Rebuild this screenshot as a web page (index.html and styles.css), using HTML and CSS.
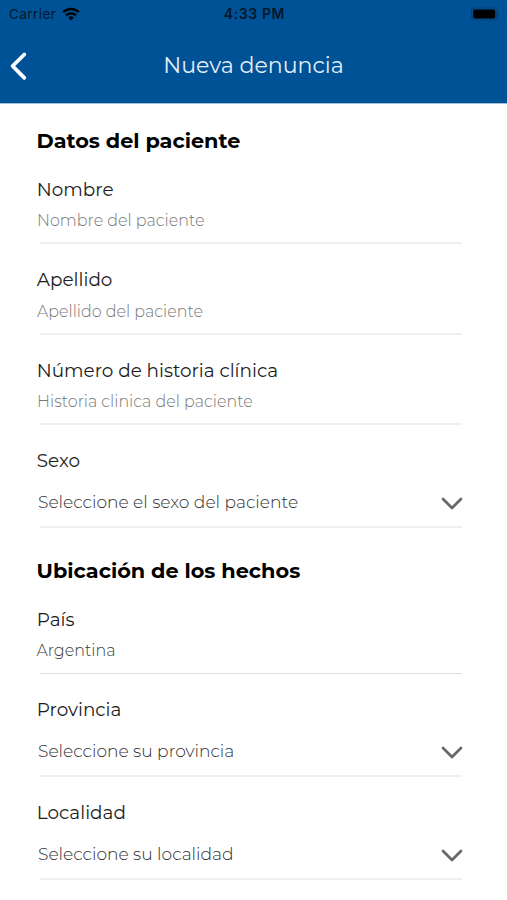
FILE: index.html
```html
<!DOCTYPE html>
<html lang="es">
<head>
<meta charset="utf-8">
<title>Nueva denuncia</title>
<link rel="stylesheet" href="styles.css">
</head>
<body>
<header class="header">
  <div class="status">
    <div class="carrier"><span>Carrier</span>
      <svg class="wifi" viewBox="0 0 18 14"><g fill="none" stroke="currentColor" stroke-width="2.4"><path d="M1.2 5.2a11.2 11.2 0 0 1 15.6 0"/><path d="M4.1 8.4a7 7 0 0 1 9.8 0"/></g><path d="M9 13.6 6.2 10.7a4 4 0 0 1 5.6 0z" fill="currentColor"/></svg>
    </div>
    <div class="time">4:33 PM</div>
    <div class="battery"><svg viewBox="0 0 30 14"><rect x="1.600" y="1" width="25" height="12" rx="3.5" fill="none" stroke="#063f78" stroke-width="1.2"/><rect x="3.200" y="2.6" width="22" height="8.8" rx="2" fill="#000"/><path d="M28.200 5v4c1.4-.5 1.4-3.500 0-4z" fill="#063f78"/></svg></div>
  </div>
  <div class="nav">
    <svg class="back" viewBox="0 0 18 30"><path d="M15.300 3.500 3.600 15 15.300 26.800" fill="none" stroke="#fff" stroke-width="3.800" stroke-linecap="round" stroke-linejoin="round"/></svg>
    <h1 class="title">Nueva denuncia</h1>
  </div>
</header>
<main class="form">
  <section class="section">
    <h2 class="heading">Datos del paciente</h2>
    <div class="field"><div class="label">Nombre</div><div class="input">Nombre del paciente</div></div>
    <div class="field"><div class="label">Apellido</div><div class="input">Apellido del paciente</div></div>
    <div class="field"><div class="label">Número de historia clínica</div><div class="input">Historia clinica del paciente</div></div>
    <div class="field select"><div class="label">Sexo</div><div class="choice"><span>Seleccione el sexo del paciente</span><svg class="chevron" viewBox="0 0 22 14"><path d="M2 2l9 9 9-9" /></svg></div></div>
  </section>
  <section class="section location">
    <h2 class="heading">Ubicación de los hechos</h2>
    <div class="field"><div class="label">País</div><div class="input filled">Argentina</div></div>
    <div class="field select"><div class="label">Provincia</div><div class="choice"><span>Seleccione su provincia</span><svg class="chevron" viewBox="0 0 22 14"><path d="M2 2l9 9 9-9" /></svg></div></div>
    <div class="field select"><div class="label">Localidad</div><div class="choice"><span>Seleccione su localidad</span><svg class="chevron" viewBox="0 0 22 14"><path d="M2 2l9 9 9-9" /></svg></div></div>
  </section>
</main>
</body>
</html>
```
FILE: styles.css
```css
* { box-sizing: border-box; }
body { margin: 0; background: #fff; font-family: Montserrat, Inter, sans-serif; height: 900px; overflow: hidden; }
.header { height: 104px; background: #005296; border-bottom: 1px solid #a3bfd9; }
.status { height: 28px; padding: 0 7px 0 9px; display: grid; grid-template-columns: 1fr auto 1fr; align-items: center; font: 400 13.5px/28px Inter, sans-serif; color: #04172b; }
.carrier { display: flex; align-items: center; gap: 6px; letter-spacing: .45px; }
.wifi { width: 18px; height: 14px; color: #000; margin-top: -1px; }
.time { font-weight: 600; font-size: 14px; letter-spacing: .6px; }
.battery { justify-self: end; display: flex; margin-top: -1px; }
.battery svg { width: 30px; height: 14px; }
.nav { height: 76px; display: grid; grid-template-columns: 36px 1fr 36px; align-items: center; }
.back { width: 18px; height: 30px; margin-left: 9px; }
.title { margin: 0; text-align: center; font-size: 22.1px; line-height: 28px; font-weight: 400; color: #e3edf7; }
.form { padding: 0 45px 0 36.5px; }
.section { padding-top: 23px; }
.location { padding-top: 29px; }
.heading { margin: 0; height: 27px; font-size: 20.8px; line-height: 28px; font-weight: 700; color: #000; }
.field { height: 90.4px; padding-top: 23.9px; display: flex; flex-direction: column; }
.field::after { content: ""; height: 2px; margin: auto 0 0 3.5px; flex: none; background: #efefef; }
.label { padding-left: .3px; font-size: 18.4px; line-height: 24px; color: #1c1c1c; }
.input { margin-top: 8.3px; padding-left: .5px; font-size: 15.95px; line-height: 22px; font-weight: 300; color: #777; }
.filled { padding-left: 0; color: #383838; }
.field:has(.filled)::after { height: 1px; background: #dedede; }
.select { height: 102.8px; }
.choice { margin-top: 17.1px; padding-left: 1.5px; display: flex; justify-content: space-between; align-items: center; font-size: 17.1px; line-height: 24px; font-weight: 300; color: #303030; }
.chevron { width: 22px; height: 14px; margin-top: 3px; margin-right: -1px; fill: none; stroke: #686868; stroke-width: 2.8; stroke-linecap: round; stroke-linejoin: round; }
```
